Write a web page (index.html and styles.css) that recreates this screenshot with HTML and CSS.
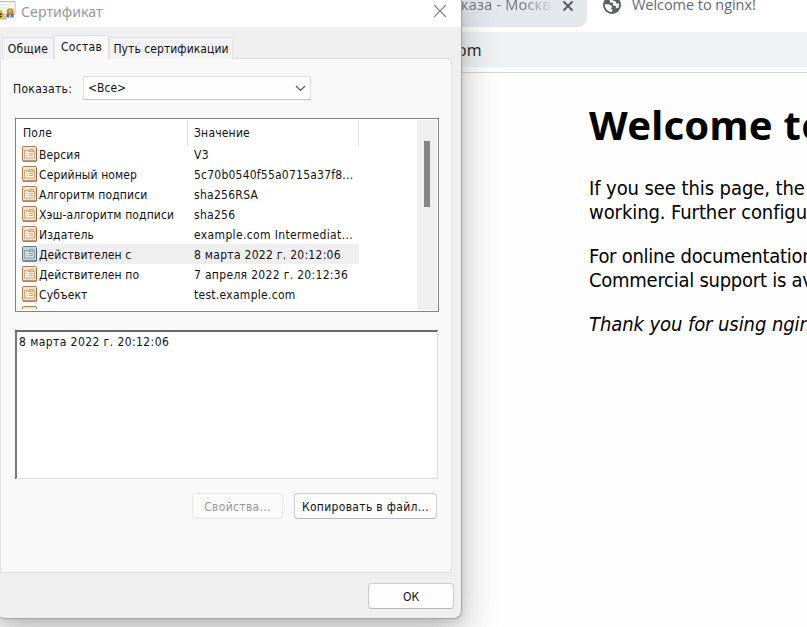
FILE: index.html
```html
<!DOCTYPE html>
<html lang="ru">
<head>
<meta charset="utf-8">
<title>Welcome to nginx!</title>
<link rel="stylesheet" href="styles.css">
</head>
<body>
<svg class="defs" width="0" height="0">
  <symbol id="field" viewBox="0 0 15 16">
    <rect x=".5" y=".5" width="14" height="14.5" rx="1" class="paper"/>
    <path class="edge" d="M1 15.2h13.5M14.5 2v13"/>
    <rect x="3" y="5" width="9" height="7" fill="#fff6e8"/>
    <path class="ink" d="M2.500 4.500v7.500h10V5.500h-1v-2h-4v2M2.500 4.500h4v1h5M4.500 7.500h1M7 7.500h4M4.500 9.500h1M7 9.500h4"/>
  </symbol>
</svg>
<div class="browser">
  <div class="tabstrip">
    <div class="btab"><span class="btab-name">каза - Москв</span><svg width="12" height="12" viewBox="0 0 12 12"><path d="M1.500 1.500l9 9M10.500 1.500l-9 9" stroke="#55585c" stroke-width="1.800"/></svg></div>
    <svg class="globe" width="18" height="18" viewBox="0 0 18 18"><circle cx="9" cy="9" r="9" fill="#5d6166"/><path d="M9 1.800L6.700 4.200 7 6.400 10.200 6.800 9.800 9.500 13.500 9.900 12.500 12.500 15.700 11.500 16 7.600 13.300 7.600 12.400 5.200 9.600 4.400Z" fill="#fff"/><path d="M1.900 8.300l4.800.2 2.700 2.400-1.600 1.400 1.700 1.600-.6 2.200C5.300 16 1.700 13 1.900 8.300Z" fill="#fff"/></svg>
    <span class="active-name">Welcome to nginx!</span>
  </div>
  <div class="address"><span>om</span></div>
  <div class="page">
    <h1>Welcome to</h1>
    <p>If you see this page, the<br>working. Further configu</p>
    <p class="docs">For online documentation<br>Commercial support is av</p>
    <p><em>Thank you for using nginx</em></p>
  </div>
</div>
<div class="dialog">
  <div class="titlebar">
    <svg class="cert" width="17" height="20" viewBox="0 0 17 20"><path d="M0 1.500h15v13H0" fill="#fbfbf8" stroke="#c2bda8"/><path d="M0 5h9M0 8h6" stroke="#d8dddc"/><path d="M7 12h3l-1 6-1.500-1-1.500 1zM10.500 12h3v6l-1.500-1-1.500 1z" fill="#3d70bd"/><circle cx="10" cy="11.500" r="3.300" fill="#d08a25"/><circle cx="10" cy="11" r="1.400" fill="#e6b354"/><path d="M0 11l1-1 5 9H0z" fill="#f3ce38" stroke="#b29a38" stroke-width=".7"/><path d="M0 14h2M0 16.500h2" stroke="#3b3930" stroke-width="1.500"/></svg>
    <span class="title">Сертификат</span>
    <svg class="close" width="14" height="14" viewBox="0 0 14 14"><path d="M1 1l12 12M13 1L1 13" stroke="#858585" stroke-width="1.200"/></svg>
  </div>
  <div class="tabs">
    <div class="tab t1"><span>Общие</span></div><div class="tab t2"><span>Состав</span></div><div class="tab t3"><span>Путь сертификации</span></div>
  </div>
  <div class="panel">
    <div class="show"><label class="w-show">Показать:</label>
      <div class="select"><span>&lt;Все&gt;</span><svg width="11" height="7" viewBox="0 0 11 7"><path d="M1 1l4.500 4.500L10 1" fill="none" stroke="#555" stroke-width="1.200"/></svg></div>
    </div>
    <div class="list">
      <div class="table">
        <div class="head"><span>Поле</span><span>Значение</span></div>
        <div class="row"><svg><use href="#field"/></svg><span class="name">Версия</span><span>V3</span></div>
        <div class="row"><svg><use href="#field"/></svg><span class="name">Серийный номер</span><span class="serial">5c70b0540f55a0715a37f8...</span></div>
        <div class="row"><svg><use href="#field"/></svg><span class="name">Алгоритм подписи</span><span>sha256RSA</span></div>
        <div class="row"><svg><use href="#field"/></svg><span class="name">Хэш-алгоритм подписи</span><span>sha256</span></div>
        <div class="row"><svg><use href="#field"/></svg><span class="name">Издатель</span><span class="issuer">example.com Intermediat...</span></div>
        <div class="row selected"><svg><use href="#field"/></svg><span class="name">Действителен с</span><span>8 марта 2022 г. 20:12:06</span></div>
        <div class="row"><svg><use href="#field"/></svg><span class="name">Действителен по</span><span class="until">7 апреля 2022 г. 20:12:36</span></div>
        <div class="row"><svg><use href="#field"/></svg><span class="name">Субъект</span><span>test.example.com</span></div>
        <div class="row last"><svg><use href="#field"/></svg><span class="name">Открытый ключ</span><span>RSA (2048 Bits)</span></div>
      </div>
      <div class="scroll"><div class="thumb"></div></div>
    </div>
    <div class="value"><span>8 марта 2022 г. 20:12:06</span></div>
    <div class="actions"><div class="btn off">Свойства...</div><div class="btn copy">Копировать в файл...</div></div>
  </div>
  <div class="footer"><div class="btn ok">ОК</div></div>
</div>
</body>
</html>
```
FILE: styles.css
```css
* { box-sizing: border-box; }
body { margin: 0; width: 807px; height: 627px; overflow: hidden; position: relative; background: #fefefe; font: 12px/20px "DejaVu Sans Condensed", "DejaVu Sans", sans-serif; font-stretch: condensed; color: #111; white-space: nowrap; }
svg { display: block; flex: none; }
.defs { position: absolute; }

.browser { height: 627px; overflow: hidden; }
.tabstrip { height: 32px; display: flex; align-items: flex-start; background: #fff; font: 14.5px/20px "Open Sans", sans-serif; color: #66696d; }
.btab { width: 587px; height: 27px; padding: 0 13px 0 461px; display: flex; justify-content: space-between; background: #e4e8ec; border-radius: 0 0 9px 0; }
.btab-name { margin-top: -5px; letter-spacing: .2px; background: linear-gradient(90deg, #6d7175 70%, #d5d9dd 100%); background-clip: text; -webkit-background-clip: text; color: transparent; }
.globe { margin: -4px 0 0 16px; }
.active-name { margin: -5px 0 0 11px; letter-spacing: -.05px; }
.address { height: 35px; padding: 8px 0 0 457px; background: #f0f2f4; font: 16px/20px "Open Sans", sans-serif; color: #222; }
.page { margin-top: 5px; border-top: 1px solid #d5d7d8; padding: 30px 0 0 589px; font-size: 20px; line-height: 24px; letter-spacing: -.08px; color: #000; }
h1 { margin: 0; font: bold 40px/44px "Noto Sans", sans-serif; letter-spacing: .25px; }
p { margin: 0 0 20px; }
.docs { letter-spacing: -.26px; }
h1 + p { margin-top: 29px; }

.dialog { position: absolute; left: -3px; top: -8px; width: 465px; height: 627px; padding: 8px 0 0 3px; background: #efefef; border: solid #a5a5a5; border-width: 0 1px 1px 0; border-radius: 8px; box-shadow: 0 14px 36px 2px rgba(0,0,0,.24), 0 2px 8px rgba(0,0,0,.1); }
.titlebar { height: 27px; margin-left: -3px; padding: 0 14px 0 3px; display: flex; background: #fff; }
.title { margin: 2px auto 0 4px; color: #999; font: 14.200px/20px "Noto Sans", sans-serif; }
.close { margin-top: 4px; }
.tabs { height: 32px; padding: 8px 0 0 2px; display: flex; align-items: flex-end; }
.tab { height: 22px; padding-top: 1px; border: 1px solid #dfe2e4; border-bottom: 0; background: #f3f3f3; text-align: center; letter-spacing: .06px; }
.t1 { width: 52px; letter-spacing: .3px; }
.t2 { width: 55px; height: 25px; margin-bottom: -1px; background: #f9f9f9; position: relative; z-index: 1; letter-spacing: .3px; }
.t3 { width: 124px; }
.panel { width: 452px; height: 515px; margin-top: -1px; padding: 17px 0 0 14px; background: #f9f9f9; border: 1px solid #dfe1e2; border-left-color: #e3e3e3; }
.show { display: flex; height: 24px; margin-left: -2px; line-height: 26px; }
.select { width: 228px; margin-left: 11px; padding: 0 4px 0 4px; display: flex; align-items: center; justify-content: space-between; background: #fefefe; border: 1px solid #dedede; border-bottom-color: #c6c6c6; }
.w-show { width: 59px; letter-spacing: .3px; }
.list { width: 424px; height: 194px; margin-top: 18px; padding: 1px; display: flex; justify-content: space-between; background: #fff; border: 1px solid #80848b; overflow: hidden; }
.table { width: 342px; height: 189px; overflow: hidden; }
.head { height: 24px; display: grid; grid-template-columns: 171px 171px; line-height: 26px; }
.head span { padding-left: 6px; border-right: 1px solid #e1e1e1; letter-spacing: .2px; }
.row { height: 20px; display: grid; grid-template-columns: 15px 157px auto; padding-left: 5px; letter-spacing: .28px; line-height: 22px; }
.row svg { width: 15px; height: 16px; margin-top: 2px; }
.row .name { padding-left: 2px; letter-spacing: .12px; }
.row .serial { letter-spacing: .22px; }
.row .issuer { letter-spacing: .36px; }
.row .until { letter-spacing: .32px; }
.last { line-height: 23px; }
.selected { background: linear-gradient(90deg, #fff 20px, #efefef 20px); }
.paper { fill: #fbe3c5; stroke: #a8794e; }
.edge { fill: none; stroke: #96683f; }
.ink { fill: none; stroke: #d49a64; stroke-width: .9; }
.selected svg { filter: hue-rotate(165deg) saturate(.4) brightness(.9); }
.scroll { width: 20px; height: 190px; background: #efefef; padding: 21px 0 0 7px; }
.thumb { width: 6px; height: 66px; background: #858585; }
.value { width: 423px; height: 149px; margin-top: 18px; padding-left: 2px; background: #fff; border: 1px solid #dcdcdc; border-top: 2px solid #696969; border-left: 2px solid #777; letter-spacing: .42px; }
.actions { display: flex; margin: 14px 0 0 177px; gap: 11px; }
.btn { height: 26px; line-height: 26px; text-align: center; background: #fdfdfd; border: 1px solid #cdcdcd; border-bottom-color: #b9b9b9; border-radius: 4px; letter-spacing: .32px; }
.off { width: 91px; color: #999; border-color: #e8e8e8; background: #fbfbfb; }
.copy { width: 143px; }
.footer { padding: 10px 7px 0 0; display: flex; justify-content: flex-end; }
.ok { width: 86px; letter-spacing: 0; }
```
